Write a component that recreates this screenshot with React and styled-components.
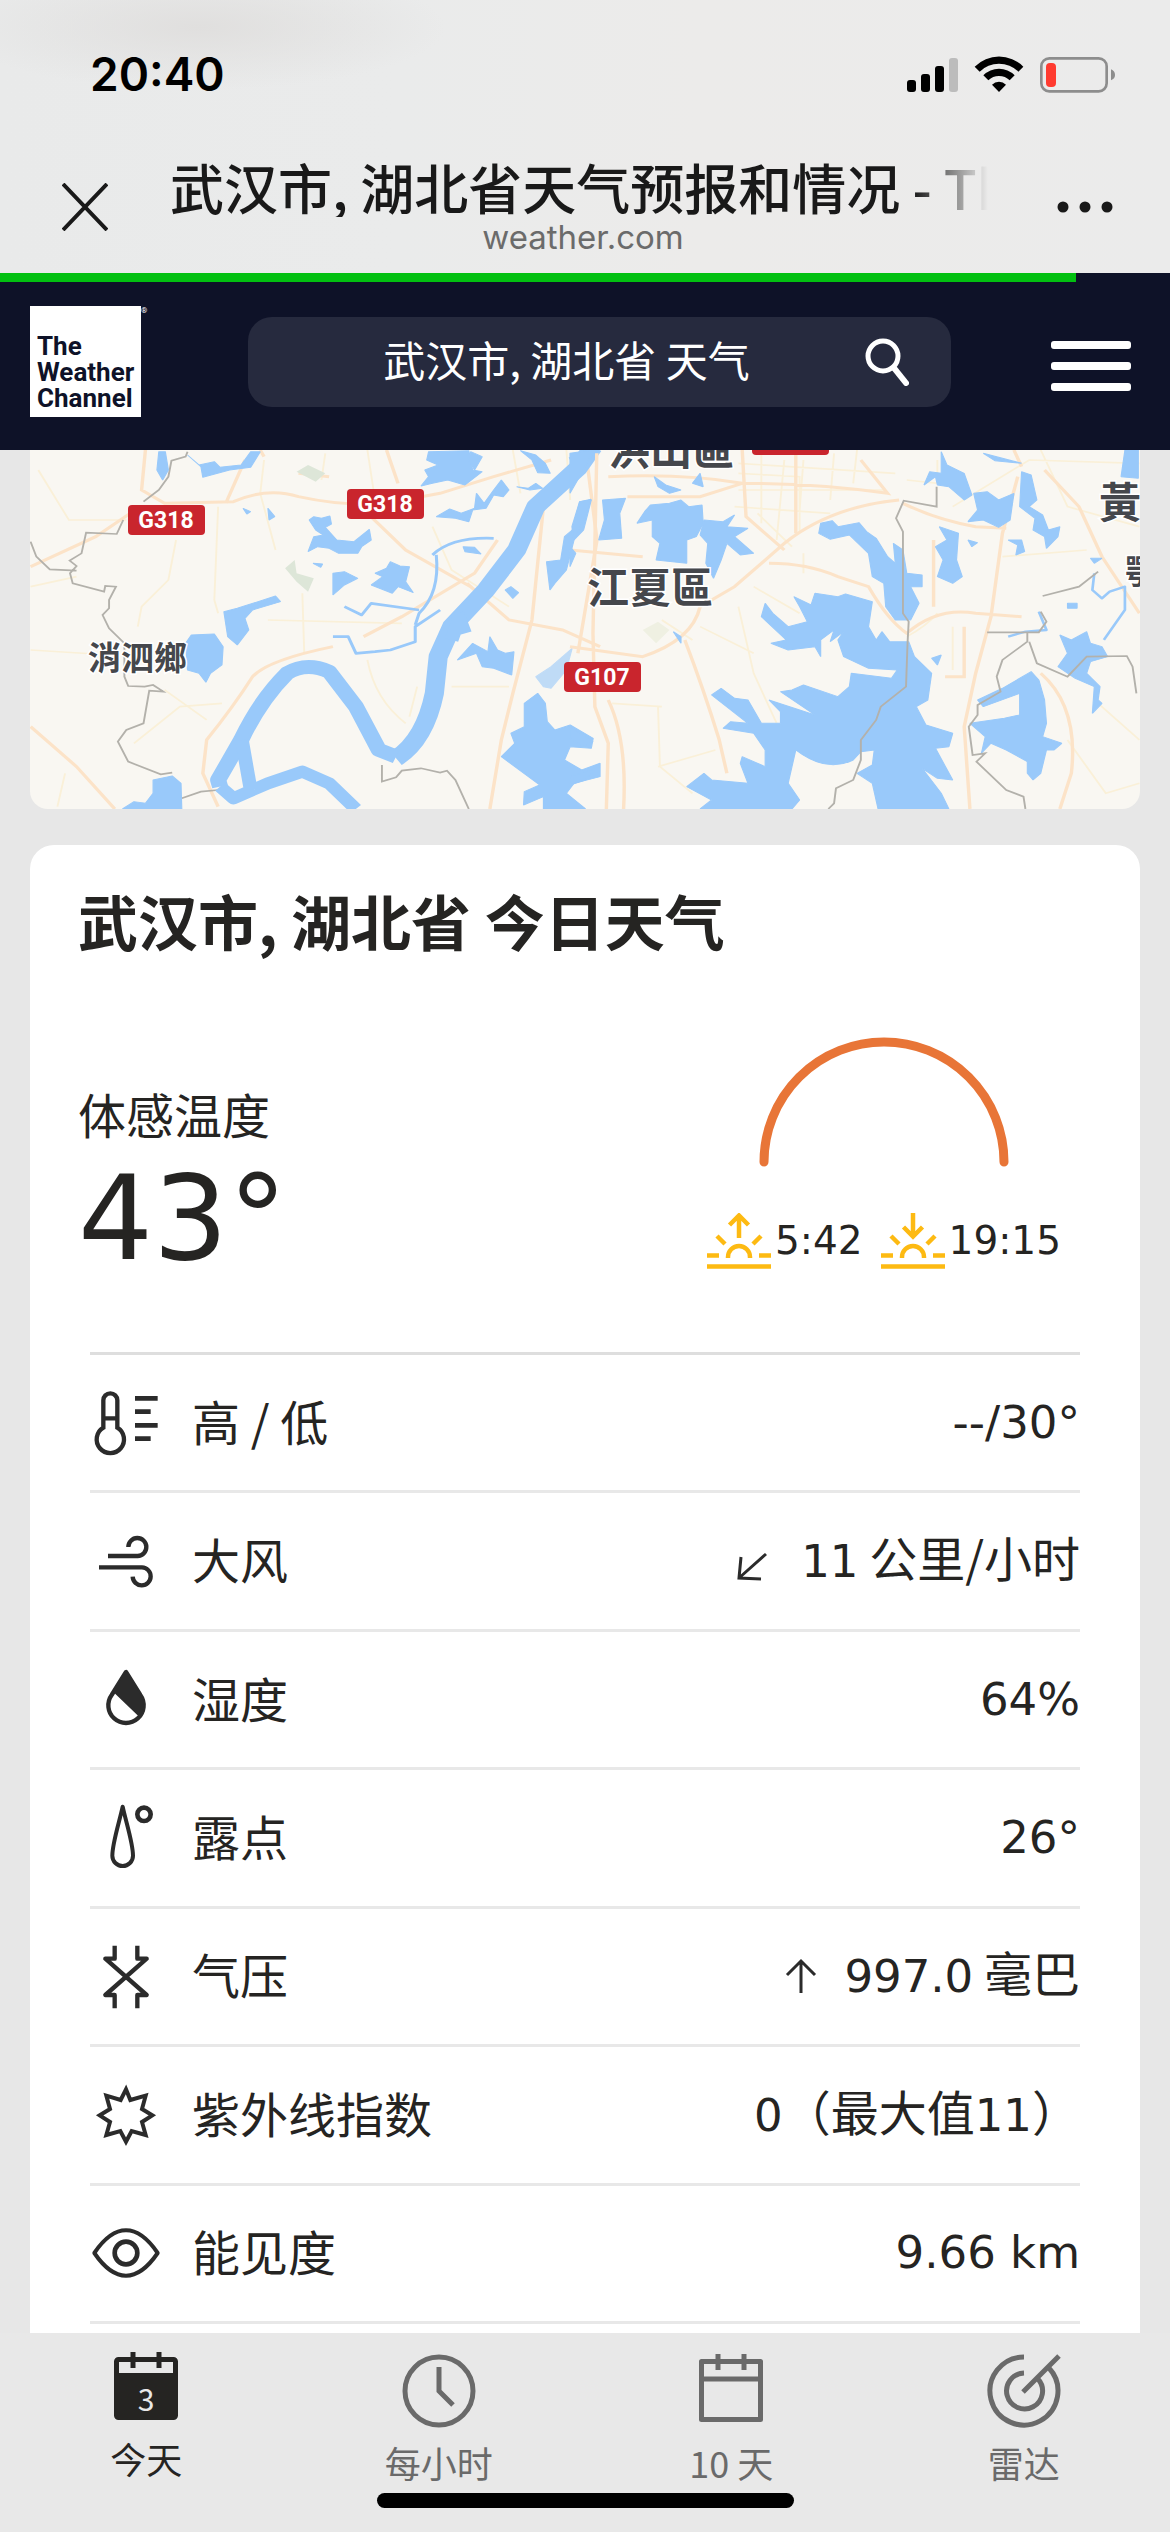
import styled, { createGlobalStyle } from 'styled-components'

const GlobalStyle = createGlobalStyle`
    * { box-sizing: border-box; }
    body {
        margin: 0;
        background: #e7e7e7;
        color: #252422;
        font-family: 'Noto Sans CJK SC', sans-serif;
    }
    button, input { font: inherit; color: inherit; border: 0; background: none; padding: 0; }
    h1, h2, p, dl, dd, dt { margin: 0; }
    svg { display: block; }
`

const Page = styled.div`
    min-height: 100vh;
    display: flex;
    flex-direction: column;
`

/* phone chrome */
const Chrome = styled.div`
    background:
        radial-gradient(ellipse at 17% 10%, #e0dfde 0%, transparent 18%),
        linear-gradient(90deg, #e9eaea 0%, #eaebeb 34%, #ecebea 60%, #ebebeb 100%);
`

const StatusBar = styled.div`
    display: flex;
    align-items: center;
    justify-content: space-between;
    height: 148px;
    padding: 0 54px 0 90px;
`

const Clock = styled.span`
    font-family: Inter, sans-serif;
    font-size: 46px;
    font-weight: 600;
    color: #000;
`

const TitleBar = styled.div`
    display: flex;
    align-items: center;
    justify-content: space-between;
    height: 125px;
    padding: 0 57px 8px 62px;
    color: #191919;
`

const TitleBlock = styled.div`
    flex: 1;
    min-width: 0;
    margin: 0 61px 0 62px;
    text-align: center;
`

const PageTitle = styled.p`
    overflow: hidden;
    white-space: nowrap;
    text-align: left;
    font-size: 54px;
    font-weight: 500;
    line-height: 60px;
    mask-image: linear-gradient(90deg, #000 90%, transparent 99%);
`

const Domain = styled.p`
    font-family: Inter, sans-serif;
    font-size: 33px;
    line-height: 40px;
    color: #6b6b6b;
`

/* site header */
const Header = styled.header`
    position: relative;
    display: flex;
    align-items: center;
    height: 177px;
    padding: 0 39px 0 30px;
    background: #0e1228;
    color: #fff;
`

const Progress = styled.div`
    position: absolute;
    top: 0;
    left: 0;
    width: 92%;
    height: 9px;
    background: #02c011;
`

const Logo = styled.a`
    display: flex;
    width: 118px;
    color: #fff;
    text-decoration: none;
    font-family: Roboto, sans-serif;
`

const LogoBox = styled.span`
    display: flex;
    flex-direction: column;
    justify-content: flex-end;
    width: 111px;
    height: 111px;
    padding: 0 0 6px 7px;
    background: #fff;
    color: #0e1228;
    font-size: 26px;
    font-weight: 700;
    line-height: 26px;
`

const Registered = styled.span`
    font-size: 8px;
    line-height: 10px;
`

const Search = styled.form`
    flex: 1;
    min-width: 0;
    display: flex;
    align-items: center;
    height: 90px;
    margin: 0 100px;
    padding: 0 42px 0 20px;
    border-radius: 24px;
    background: #262a3e;
`

const SearchInput = styled.input`
    flex: 1;
    min-width: 0;
    padding-bottom: 6px;
    text-align: center;
    font-size: 42px;
    outline: none;
`

const IconButton = styled.button`
    display: block;
`

const MenuButton = styled(IconButton)`
    padding-top: 9px;
`

/* content */
const Main = styled.main`
    flex: 1;
    padding: 0 30px;
`

const MapCard = styled.section`
    border-radius: 0 0 18px 18px;
    overflow: hidden;
    margin-bottom: 36px;
`

const MapDrawing = styled.svg`
    width: 100%;
    height: auto;
    background: #f9f7f2;
`

const Card = styled.section`
    padding: 39px 0 9px;
    border-radius: 24px 24px 0 0;
    background: #fff;
`

const CardTitle = styled.h1`
    padding: 0 48px;
    font-size: 60px;
    font-weight: 700;
    line-height: 72px;
`

const Summary = styled.div`
    display: flex;
    justify-content: space-between;
    padding: 81px 79px 68px 48px;
`

const FeelsLike = styled.div`
    padding-top: 46px;
    font-size: 48px;
    line-height: 60px;
`

const Temperature = styled.div`
    margin-top: 9px;
    font-family: 'DejaVu Sans', sans-serif;
    font-size: 118px;
    line-height: 132px;
`

const SunTimes = styled.div`
    display: flex;
    flex-direction: column;
    align-items: center;
    gap: 46px;
`

const SunRow = styled.div`
    display: flex;
    gap: 18px;
`

const SunTime = styled.p`
    display: flex;
    align-items: center;
    gap: 4px;
    font-family: 'DejaVu Sans', sans-serif;
    font-size: 39px;
    line-height: 56px;
`

const Details = styled.dl`
    display: grid;
    grid-auto-rows: 1fr;
    height: 972px;
    margin: 0 60px;
    border-top: 3px solid #dedede;
`

const DetailRow = styled.div`
    display: flex;
    align-items: center;
    border-bottom: 3px solid #e8e8e8;
    font-size: 48px;
    line-height: 60px;
`

const DetailLabel = styled.dt`
    margin-left: 30px;
    padding-bottom: 6px;
`

const DetailValue = styled.dd`
    display: flex;
    align-items: center;
    margin-left: auto;
    white-space: pre;
`

// baseline keeps the figures level with the characters next to them
const Reading = styled.span`
    display: flex;
    align-items: baseline;
    padding-bottom: ${props => props.$mixed ? '4px' : '0'};
`

const Num = styled.span`
    font-family: 'DejaVu Sans', sans-serif;
    font-size: 45px;
`

const Arrow = styled.svg`
    width: 30px;
    height: 36px;
    margin-right: 34px;
    overflow: visible;
    fill: none;
    stroke: #2b2b2b;
    stroke-width: 3;
`

const RowIcon = styled.svg`
    width: 72px;
    height: 72px;
    fill: none;
    stroke: #2b2b2b;
    stroke-width: 14;
`

/* bottom tabs */
const TabBar = styled.nav`
    background: #e8e8e8;
    padding-bottom: 24px;
`

const Tabs = styled.div`
    display: grid;
    grid-template-columns: repeat(4, 1fr);
    height: 160px;
    padding-top: 19px;
`

const Tab = styled.a`
    display: flex;
    flex-direction: column;
    align-items: center;
    gap: ${props => props.$active ? '6px' : '10px'};
    color: ${props => props.$active ? '#252422' : '#6a6a6a'};
    font-size: 36px;
    line-height: 48px;
    text-decoration: none;
`

const TabIcon = styled.svg`
    width: 76px;
    height: 76px;
    fill: none;
    stroke: currentColor;
    stroke-width: 5;
`

const HomeIndicator = styled.div`
    width: 417px;
    height: 15px;
    margin: 0 auto;
    border-radius: 8px;
    background: #000;
`

const Water = styled.g`
    fill: #99c9fa;
    stroke: #99c9fa;
    stroke-width: 3;
    stroke-linejoin: bevel;
`

const River = styled.path`
    fill: none;
    stroke: #99c9fa;
    stroke-width: ${props => props.$w};
    stroke-linejoin: round;
`

const Road = styled.path`
    fill: none;
    stroke: ${props => props.$minor ? '#faf0d8' : '#fce3c8'};
    stroke-width: ${props => props.$minor ? 5 : 9};
`

const Border = styled.path`
    fill: none;
    stroke: #b3b1ab;
    stroke-width: 5;
`

const Place = styled.text`
    font-family: 'Noto Sans CJK TC', sans-serif;
    font-size: ${props => props.$small ? 33 : 42}px;
    font-weight: 700;
    fill: #45474c;
    stroke: #fff;
    stroke-width: 3;
    paint-order: stroke;
`

const BadgeText = styled.text`
    font-family: Roboto, sans-serif;
    font-size: 23px;
    font-weight: 700;
    fill: #fff;
    text-anchor: middle;
`

const badges = [
    { x: 128, y: 505, label: 'G318' },
    { x: 347, y: 489, label: 'G318' },
    { x: 564, y: 662, label: 'G107' },
    { x: 752, y: 425, label: 'G316' },
]

const AreaMap = () => (
    <MapDrawing viewBox="30 450 1110 359" role="img" aria-label="武汉市地图">
        <g transform="translate(0,440) scale(.3827,.3333)">
            <Road $minor d="M80 440 L200 410 M100 90 L180 240 L330 240 M460 300 L440 420 L370 500 L360 560 M570 200 L560 480 M560 480 L570 520 M700 540 L1050 550 M790 460 L795 640 M690 60 L680 160 L720 330 M960 30 L980 180 M850 40 L840 120 M350 910 L470 800 L580 790 M430 750 L540 840 M150 1100 L170 1000 M1180 740 L1330 740 M1070 830 L1090 740 M960 660 Q980 780 1060 850 M1130 260 L1180 390 L1330 500 M1480 30 L1490 180 M1340 30 L1360 160 M80 630 L290 645"/>
            <Road d="M80 380 L250 290 L340 220 M380 30 L370 150 L430 190 L610 185 Q700 140 780 170 Q900 200 1010 190 L1150 160 L1290 110 L1440 60 M590 190 L640 60 M680 30 L690 50 M780 100 L860 110 M1010 30 L1040 130 M870 620 Q700 660 660 710 Q610 800 540 900 L530 1000 L570 1100 M80 860 L200 980 L300 1107 M1420 200 L1390 540 L1340 760 L1310 900 L1280 1107 M1530 30 L1560 300 L1510 640 M1220 430 L1330 540 L1470 570 L1568 620 M960 220 L1060 330 L1230 440 M1300 300 L1240 400 L1050 530 L950 590"/>
            <Border d="M490 35 L485 50 L448 62 L440 110 L415 150 L375 185 M322 240 L305 282 L225 278 L213 340 L182 362 L200 378 L183 400 L190 430 L272 455 L275 438 L303 440 L285 480 L285 505 L268 525 L285 565 L325 610 L325 710 L335 738 L378 740 L400 735 L427 755 L390 752 L375 850 L330 870 L308 905 L335 965 L420 1003 L450 998 M80 305 L95 350 L130 388 L200 392 M475 1075 L525 1055 L570 1050 L640 1060 M998 975 L998 1025 L1035 1012 L1050 992 L1100 985 L1150 998 L1168 992 L1190 1020 L1225 1107"/>
            <River $w={50} d="M1550 20 L1510 85 L1400 200 L1350 330 L1270 450 L1180 560 L1145 650 L1135 760 Q1110 900 1035 955"/>
            <River $w={36} d="M1195 520 L1215 580 M1205 520 L1180 600"/>
            <River $w={42} d="M1035 950 L990 930 L930 800 L860 695 Q800 665 750 700 Q680 780 630 900 L570 1020 L575 1040"/>
            <River $w={36} d="M575 1040 L610 1075 L700 1030 L790 995 L860 1030 L930 1107 M632 900 L655 1050"/>
            <River $w={8} d="M1140 345 Q1150 460 1095 520 L1085 555 M1130 345 Q1180 290 1290 295 M900 500 L945 525 L970 490 L1095 510 M870 590 L910 590 L930 640 L980 635 L1020 630 L1085 605 L1085 560 L1150 510"/>
            <Water>
                <path d="M415 35 L432 35 L440 90 L425 120 L410 90z"/>
                <path d="M490 45 L520 75 L560 65 L575 82 L630 75 L655 35 L680 35 L655 82 L600 90 L530 112 L525 80z"/>
                <path d="M1120 35 L1225 32 L1235 90 L1260 95 L1215 135 L1170 120 L1130 130 L1100 138 L1120 110 L1110 90 L1145 75 L1115 60z"/>
                <path d="M1230 35 L1260 50 L1240 90 L1225 60z M1360 32 L1400 45 L1425 70 L1438 100 L1405 98 L1390 60z"/>
                <path d="M1140 230 L1175 207 L1205 220 L1240 205 L1245 160 L1265 190 L1290 150 L1310 120 L1330 150 L1315 170 L1290 165 L1270 205 L1235 210 L1225 245 L1190 235z"/>
                <path d="M1350 140 L1385 150 L1418 145 L1400 130 L1380 145z M1210 320 L1240 322 L1257 342 L1215 335z"/>
                <path d="M808 240 L820 230 L840 235 L862 228 L866 252 L850 262 L880 300 L925 305 L965 268 L970 300 L945 320 L935 340 L885 340 L860 325 L830 320 L805 335 L820 290 L845 285 L825 270z"/>
                <path d="M870 400 L900 395 L935 415 L900 435 L870 465z M980 400 L1010 385 L1020 365 L1045 378 L1070 380 L1060 425 L1080 458 L1040 440 L1025 460 L970 435 L1000 410z"/>
                <path d="M700 205 L718 230 L703 240z M635 205 L655 215 L645 222z M818 370 L843 372 L838 382z"/>
                <path d="M585 515 L620 505 L720 468 L733 485 L660 510 L640 535 L650 570 L620 615 L595 590z"/>
                <path d="M500 585 L560 582 L583 620 L580 675 L550 700 L538 727 L520 700 L490 690 L485 610z"/>
                <path d="M400 1020 L450 1008 L473 1030 L475 1107 L320 1107 L350 1085 L380 1090 L400 1060z"/>
                <path d="M1235 610 L1275 635 L1280 590 L1300 630 L1320 640 L1343 635 L1337 705 L1290 685 L1260 680 L1245 640 L1195 660z"/>
                <path d="M1515 185 L1545 180 L1525 270 L1500 300 L1480 390 L1450 430 L1437 450 L1428 365 L1465 360 L1475 290 L1495 270z M1320 450 L1335 440 L1355 458 L1340 475z"/>
                <path d="M1370 790 L1405 760 L1425 790 L1430 845 L1450 870 L1490 855 L1550 895 L1545 925 L1490 920 L1475 960 L1520 990 L1568 970 L1568 1010 L1500 1030 L1480 1060 L1530 1107 L1420 1107 L1420 1070 L1368 1095 L1370 1055 L1410 1035 L1310 950 L1345 910 L1335 880 L1370 860z"/>
                <path d="M1400 710 L1440 680 L1495 625 L1480 690 L1440 745 L1420 740z" opacity=".6"/>
            </Water>
            <path d="M745 385 L770 360 L775 400 L820 415 L805 455 L775 425z M775 95 L805 75 L850 100 L825 125z" fill="#dde6d8"/>
        </g>
        <g transform="translate(570,440) scale(.3827,.3333)">
            <Road $minor d="M440 70 L850 100 M500 30 L500 250 M560 60 L540 300 M440 100 L600 110 L600 280 M690 40 L680 180 M440 150 L820 150 M430 200 L680 220 M610 60 L600 210 M750 30 L740 130 M880 120 L960 130 L960 60 M1000 200 L1200 60 L1488 70 M1230 30 L1300 200 L1488 260 M1130 350 L1350 330 M1000 560 L1000 690 M960 520 Q930 560 880 590 M230 980 L380 930 M110 790 L240 800 M340 560 L480 640 M480 440 L600 520 M440 500 L480 700 L540 850 M230 800 L235 980 L320 1060 M1300 900 L1400 1060 L1488 1030 M1380 790 L1488 900 M240 540 L320 600 M610 340 L610 400 M490 220 L580 320"/>
            <Road d="M0 330 L190 350 M70 40 L60 580 L65 800 L100 910 L95 1107 M0 620 L190 650 Q320 600 340 500 L430 440 L560 310 Q680 200 860 180 M100 110 Q300 100 450 130 Q650 130 830 160 L760 60 M150 170 L340 170 L450 130 M870 190 Q960 240 1060 260 L1140 265 M450 30 L460 230 L560 330 M520 370 Q620 370 700 410 L780 440 Q830 540 880 580 Q960 500 1060 520 L1180 530 M950 300 L950 500 M1170 110 L1130 280 L1100 530 L1060 700 L1030 860 L1045 1107 M1160 30 L1180 80 M1240 90 L1330 200 L1390 350 L1488 520 M1230 700 Q1330 800 1310 1000 L1280 1107 M300 600 Q350 750 390 900 L410 1000 M100 780 Q150 900 140 1107 M1030 560 L1030 710 L980 710 M590 30 L590 280"/>
            <River $w={16} d="M0 60 L60 30 L0 130"/>
            <River $w={7} d="M1370 400 L1365 450 L1390 475 L1410 455 L1450 440 L1450 510 L1395 600 M1145 590 L1190 575 L1245 570 L1225 515"/>
            <Water>
                <path d="M0 40 L60 30 L30 100 L0 160z M5 260 L25 185 L55 178 L40 230 L10 300z M85 180 L145 175 L130 220 L135 295 L75 300 L90 240z"/>
                <path d="M220 110 L250 135 L290 150 L260 160 L230 140z M340 100 L348 140 L320 130z M0 320 L15 340 L0 380z"/>
                <path d="M210 195 L260 190 L290 180 L310 200 L345 195 L348 250 L330 290 L305 300 L305 370 L225 360 L235 310 L215 290 L215 240 L175 250 L195 215z"/>
                <path d="M350 240 L400 245 L430 225 L410 260 L465 265 L430 290 L480 340 L445 345 L410 310 L395 360 L375 415 L355 370 L360 310 L340 285z"/>
                <path d="M655 250 L685 242 L700 260 L755 248 L775 275 L800 295 L830 350 L850 370 L845 310 L870 330 L880 400 L920 405 L920 440 L890 440 L912 490 L890 540 L850 540 L825 500 L820 430 L790 410 L780 340 L730 285 L680 298 L650 280z"/>
                <path d="M970 35 L985 75 L1030 100 L1050 165 L1030 180 L990 140 L960 135 L955 110 L925 135 L940 95 L970 100z M1080 40 L1180 70 L1110 62z"/>
                <path d="M1055 160 L1090 155 L1120 180 L1160 160 L1150 240 L1120 262 L1080 240 L1040 245 L1065 210z"/>
                <path d="M1180 95 L1205 105 L1220 180 L1200 200 L1235 225 L1250 270 L1280 260 L1275 290 L1245 325 L1240 290 L1210 270 L1215 235 L1175 200z"/>
                <path d="M965 260 L1015 280 L1010 360 L1025 410 L1000 430 L960 410 L975 360 L955 320 L985 300z M1145 300 L1180 300 L1188 335 L1165 345 L1170 315z M1040 300 L1065 308 L1050 320z"/>
                <path d="M1450 30 L1485 30 L1485 115 L1440 110z"/>
                <path d="M510 490 L530 520 L570 560 L620 545 L600 500 L585 470 L630 495 L640 460 L700 470 L720 462 L790 485 L780 560 L800 600 L815 575 L835 605 L885 605 L900 650 L945 700 L935 780 L905 800 L930 855 L1000 880 L990 920 L955 925 L1000 1020 L960 1015 L920 985 L970 1060 L990 1107 L805 1107 L790 1030 L750 1000 L790 975 L795 930 L760 935 L740 960 Q670 1000 590 930 L570 1030 L600 1080 L580 1107 L340 1107 L370 1080 L305 1040 L350 1000 L370 1020 L465 1030 L445 970 L450 950 L510 980 L510 930 L480 880 L400 865 L420 845 L465 850 L370 765 L395 745 L430 775 L465 780 L500 850 L550 850 L550 815 L520 780 L640 825 L550 755 L580 750 L610 735 L700 770 L730 740 L735 700 L840 715 L855 690 L780 685 L715 650 L700 600 L715 575 L680 605 L690 570 L655 600 L655 650 L640 620 L570 630 L525 610 L565 600 L500 530z"/>
                <path d="M1205 695 L1225 720 L1240 780 L1245 850 L1235 890 L1285 910 L1265 930 L1245 930 L1230 1000 L1210 1020 L1195 1000 L1195 965 L1140 930 L1100 910 L1075 940 L1085 890 L1045 850 L1135 835 L1175 825 L1175 760 L1080 800 L1065 780 L1130 745z"/>
                <path d="M1280 585 L1310 600 L1350 575 L1360 610 L1390 620 L1405 650 L1360 665 L1350 700 L1385 740 L1380 780 L1390 790 L1365 820 L1370 740 L1320 715 L1275 680 L1300 640z"/>
                <path d="M1300 490 L1325 490 L1325 505 L1300 505z M945 655 L970 645 L960 675z M0 860 L60 905 L35 920 L0 895z M0 1010 L70 985 L40 1020 L0 1035z M270 575 L290 590 L290 610z M1360 355 L1390 355 L1370 370z"/>
            </Water>
            <Border d="M958 140 L958 200 L872 182 L852 235 L870 275 L870 520 L885 545 L882 610 L878 740 L812 800 L800 840 L760 900 L760 960 L740 1020 L695 1045 L690 1090 L675 1107 M1380 395 L1330 440 L1235 468 M1230 515 L1245 545 L1225 577 L1090 577 M1195 575 L1195 605 L1130 660 L1115 710 L1125 755 L1065 795 L1065 825 L1042 860 L1052 945 L1085 940 L1062 965 L1140 1050 L1185 1070 L1190 1107 M1200 605 L1220 670 L1300 710 L1350 650 L1455 648 L1470 680 L1480 760"/>
            <path d="M190 570 L230 545 L260 570 L225 610z" fill="#eff0e2"/>
        </g>
        {badges.map(b => (
            <g key={b.label + b.x}>
                <rect x={b.x} y={b.y} width="77" height="30" rx="4" fill="#c9252d"/>
                <BadgeText x={b.x + 38} y={b.y + 23}>{b.label}</BadgeText>
            </g>
        ))}
        <Place $small x="88" y="670">消泗鄉</Place>
        <Place x="587" y="603">江夏區</Place>
        <Place x="608" y="465">洪山區</Place>
        <Place x="1099" y="518">黃</Place>
        <Place $small x="1125" y="584">鄂</Place>
    </MapDrawing>
)

const details = [
    {
        label: '高 / 低',
        box: '90 110 216 216',
        icon: <><path d="M130 232 V150 a21 21 0 0 1 42 0 V232 a41 41 0 1 1 -42 0z M130 204 H172" strokeWidth="13"/><path d="M225 144 H293 M225 184 H272 M225 225 H293 M225 265 H272"/></>,
        value: <Num>--/30°</Num>,
    },
    {
        label: '大风',
        box: '90 525 216 216',
        icon: <path d="M144 618 H233 a27 27 0 1 0 -28 -27 M117 652 H246 a27 27 0 1 1 -28 28" strokeWidth="13"/>,
        arrow: <Arrow viewBox="0 -4 30 36"><path d="M29 7 L2 31 M4 10 L2 31 L24 32"/></Arrow>,
        mixed: true,
        value: <><Num>11</Num> 公里/小时</>,
    },
    {
        label: '湿度',
        box: '90 941 216 216',
        icon: <><path d="M198 965 L155 1034 a53 53 0 1 0 86 0z" strokeWidth="13" strokeLinejoin="round"/><path d="M198 965 L160 1025 L238 1100 Q262 1066 241 1034z" fill="#2b2b2b" stroke="none"/></>,
        value: <Num>64%</Num>,
    },
    {
        label: '露点',
        box: '90 1356 216 216',
        icon: <><path d="M188 1370 C177 1420 157 1480 157 1517 a31 31 0 0 0 62 0 C219 1480 199 1420 188 1370z" strokeWidth="12" strokeLinejoin="round"/><circle cx="252" cy="1393" r="20"/></>,
        value: <Num>26°</Num>,
    },
    {
        label: '气压',
        box: '90 302 216 216',
        icon: <path d="M164 319 V358 H136 L260 467 H232 V507 M232 319 V358 H260 L136 467 H164 V507" strokeWidth="13" strokeLinejoin="round"/>,
        arrow: <Arrow viewBox="-6 0 30 36"><path d="M15 35 V3 M1 17 L15 3 L29 17"/></Arrow>,
        mixed: true,
        value: <><Num>997.0</Num> 毫巴</>,
    },
    {
        label: '紫外线指数',
        box: '90 718 216 216',
        icon: <path d="M198 749 L211 781 L257 768 L246 808 L277 827 L246 847 L257 886 L215 874 L198 906 L181 874 L139 886 L150 847 L119 827 L150 808 L139 768 L182 781z" strokeWidth="12"/>,
        mixed: true,
        value: <><Num>0</Num>（最大值<Num>11</Num>）</>,
    },
    {
        label: '能见度',
        box: '90 1133 216 216',
        icon: <><path d="M103 1241 C135 1194 165 1173 198 1173 C231 1173 261 1194 293 1241 C261 1288 231 1309 198 1309 C165 1309 135 1288 103 1241z" strokeWidth="12" strokeLinejoin="round"/><circle cx="198" cy="1241" r="34"/></>,
        value: <Num>9.66 km</Num>,
    },
]

const tabs = [
    {
        label: '今天',
        active: true,
        icon: <>
            <rect x="8.5" y="7.500" width="59" height="58" rx="2"/>
            <rect x="8" y="21" width="60" height="46" rx="3" fill="currentColor" stroke="none"/>
            <path d="M25 0 V16 M51 0 V16"/>
            <text x="38" y="59" fontSize="30" fill="#e8e8e8" stroke="none" textAnchor="middle">3</text>
        </>,
    },
    { label: '每小时', icon: <><circle cx="38" cy="39" r="34"/><path d="M38 15 V39 L52 53"/></> },
    { label: '10 天', icon: <path d="M8.500 9.500 H67.500 V67.500 H8.500z M8 27 H68 M25 2 V18 M51 2 V18" strokeLinejoin="round"/> },
    {
        label: '雷达',
        icon: <path d="M38 5 A34 34 0 1 0 63 16 M38 21 A18 18 0 1 0 52 27 M37 40 L73 4"/>,
    },
]

const SunIcon = ({ down }) => (
    <svg width="64" height="56" viewBox="0 0 64 56" fill="none" stroke="#fdba12" strokeWidth="4.500" aria-hidden="true">
        <path d="M0 53.500 H64 M0 42.500 H12 M52 42.500 H64 M10 23 L18 31 M54 23 L46 31 M21 45 V44 a11 11 0 0 1 22 0 V45"/>
        <path d={down ? 'M32 0 V23 M22.500 14 L32 23.500 L41.500 14' : 'M32 25 V3 M22.500 12 L32 2.500 L41.500 12'}/>
    </svg>
)

const App = () => (
    <Page>
        <GlobalStyle/>
        <Chrome>
            <StatusBar>
                <Clock>20:40</Clock>
                <svg width="210" height="39" viewBox="48 42 630 117" aria-hidden="true">
                    <rect x="51" y="117" width="27" height="36" rx="9"/>
                    <rect x="93" y="99" width="27" height="54" rx="9"/>
                    <rect x="135" y="75" width="27" height="78" rx="9"/>
                    <rect x="177" y="51" width="27" height="102" rx="9" fill="#bcbcbc"/>
                    <path d="M254 77 a103 103 0 0 1 146 0 l-15 15 a82 82 0 0 0 -116 0z M280 103 a66 66 0 0 1 94 0 l-15 15 a45 45 0 0 0 -64 0z M306 131 a30 30 0 0 1 42 0 L327 153z"/>
                    <rect x="454" y="52" width="196" height="99" rx="24" fill="none" stroke="#8d8d8d" strokeWidth="8"/>
                    <rect x="468" y="66" width="30" height="72" rx="12" fill="#ff3b30"/>
                    <path d="M663 85 Q675 90 675 102 Q675 113 663 118z" fill="#8d8d8d"/>
                </svg>
            </StatusBar>
            <TitleBar>
                <IconButton aria-label="关闭">
                    <svg width="46" height="48" viewBox="0 0 46 48" fill="none" stroke="#191919" strokeWidth="4">
                        <path d="M1 1 L45 47 M45 1 L1 47"/>
                    </svg>
                </IconButton>
                <TitleBlock>
                    <PageTitle>武汉市, 湖北省天气预报和情况 - The Weather Channel</PageTitle>
                    <Domain>weather.com</Domain>
                </TitleBlock>
                <IconButton aria-label="更多">
                    <svg width="56" height="12" viewBox="0 0 56 12" fill="#191919">
                        <circle cx="6" cy="6" r="5.500"/>
                        <circle cx="28" cy="6" r="5.500"/>
                        <circle cx="50" cy="6" r="5.500"/>
                    </svg>
                </IconButton>
            </TitleBar>
        </Chrome>

        <Header>
            <Progress/>
            <Logo href="#">
                <LogoBox>
                    <span>The</span>
                    <span>Weather</span>
                    <span>Channel</span>
                </LogoBox>
                <Registered>®</Registered>
            </Logo>
            <Search onSubmit={e => e.preventDefault()}>
                <SearchInput type="text" aria-label="搜索城市" defaultValue="武汉市, 湖北省 天气"/>
                <IconButton type="submit" aria-label="搜索">
                    <svg width="44" height="48" viewBox="0 0 44 48" fill="none" stroke="#fff" strokeWidth="5">
                        <circle cx="18" cy="18" r="15"/>
                        <path d="M29 30 L41 45" strokeWidth="6" strokeLinecap="round"/>
                    </svg>
                </IconButton>
            </Search>
            <MenuButton aria-label="菜单">
                <svg width="80" height="50" viewBox="0 0 80 50" fill="#fff">
                    <rect width="80" height="8" rx="3"/>
                    <rect y="21" width="80" height="8" rx="3"/>
                    <rect y="42" width="80" height="8" rx="3"/>
                </svg>
            </MenuButton>
        </Header>

        <Main>
            <MapCard>
                <AreaMap/>
            </MapCard>
            <Card>
                <CardTitle>武汉市, 湖北省 今日天气</CardTitle>
                <Summary>
                    <FeelsLike>
                        体感温度
                        <Temperature>43°</Temperature>
                    </FeelsLike>
                    <SunTimes>
                        <svg width="250" height="130" viewBox="0 0 250 130" fill="none" stroke="#e87537" strokeWidth="9" strokeLinecap="round" aria-hidden="true">
                            <path d="M5 125 a120 120 0 0 1 240 0"/>
                        </svg>
                        <SunRow>
                            <SunTime><SunIcon/>5:42</SunTime>
                            <SunTime><SunIcon down/>19:15</SunTime>
                        </SunRow>
                    </SunTimes>
                </Summary>
                <Details>
                    {details.map(d => (
                        <DetailRow key={d.label}>
                            <RowIcon viewBox={d.box} aria-hidden="true">{d.icon}</RowIcon>
                            <DetailLabel>{d.label}</DetailLabel>
                            <DetailValue>
                                {d.arrow}
                                <Reading $mixed={d.mixed}>{d.value}</Reading>
                            </DetailValue>
                        </DetailRow>
                    ))}
                </Details>
            </Card>
        </Main>

        <TabBar>
            <Tabs>
                {tabs.map(t => (
                    <Tab key={t.label} href="#" $active={t.active}>
                        <TabIcon viewBox="0 0 76 76" aria-hidden="true">{t.icon}</TabIcon>
                        {t.label}
                    </Tab>
                ))}
            </Tabs>
            <HomeIndicator/>
        </TabBar>
    </Page>
)

export default App
